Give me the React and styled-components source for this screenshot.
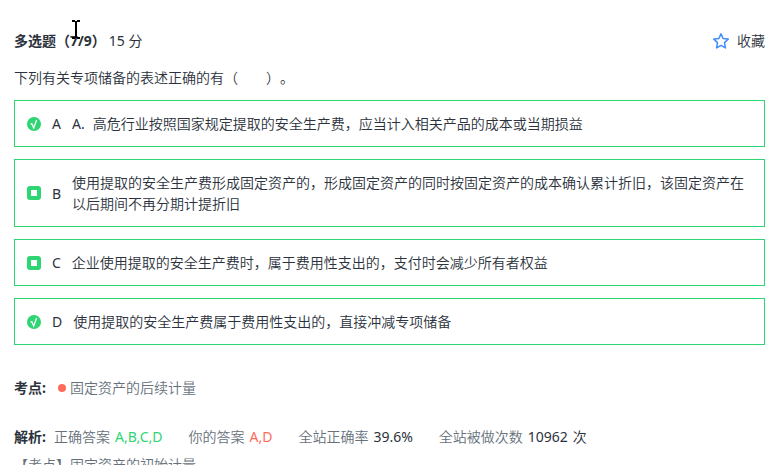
import React from 'react'
import styled, { createGlobalStyle } from 'styled-components'

const color = {
  green: '#2ed573',
  red: '#ff6b5b',
  blue: '#3f8cff',
  text: '#2b323c',
  secondary: '#67717b',
}

const GlobalStyle = createGlobalStyle`
  html {
    scrollbar-width: none;
  }

  body {
    margin: 0;
    background: #fff;
    color: ${color.text};
    font-family: "Noto Sans", "Noto Sans CJK SC", sans-serif;
    font-size: 14px;
    font-weight: 350;
    line-height: 21px;
    text-spacing-trim: space-all;
  }
`

const Page = styled.main`
  position: relative;
  padding: 30px 13px 0 14px;
`

const Header = styled.header`
  display: flex;
  justify-content: space-between;
  align-items: center;
  margin-bottom: 16px;
`

const Title = styled.h1`
  display: flex;
  gap: 3px;
  margin: 0;
  font-size: 14px;
  font-weight: bold;
`

const Score = styled.span`
  font-weight: 400;
`

const Collect = styled.button`
  display: flex;
  align-items: center;
  gap: 8px;
  padding: 0;
  border: 0;
  background: none;
  color: inherit;
  font: inherit;
  cursor: pointer;
`

const Question = styled.p`
  margin: 0 0 12px;
`

const Options = styled.div`
  display: flex;
  flex-direction: column;
  gap: 12px;
  margin-bottom: 32px;
`

const OptionRow = styled.label`
  display: flex;
  align-items: center;
  gap: 11px;
  padding: 12px;
  border: 1px solid ${color.green};
`

const Letter = styled.span`
  font-weight: 400;
`

const Prefix = styled.span`
  margin-right: 8px;
  font-weight: 400;
`

const MarkBox = styled.span`
  position: relative;
  flex: none;
  width: 14px;
  height: 14px;

  svg {
    display: block;
  }
`

const MarkInput = styled.input`
  position: absolute;
  inset: 0;
  width: 14px;
  height: 14px;
  margin: 0;
  opacity: 0;
`

const InfoRow = styled.div`
  display: flex;
  align-items: center;
  gap: 8px;
  margin-bottom: ${props => props.$gap}px;
`

const InfoLabel = styled.strong`
  font-weight: bold;
`

const Point = styled.span`
  display: flex;
  align-items: center;
  gap: 4px;
  padding-left: 4px;
  color: ${color.secondary};
`

const Dot = styled.i`
  width: 8px;
  height: 8px;
  border-radius: 50%;
  background: ${color.red};
`

const Stats = styled.div`
  display: flex;
  gap: 26px;
  color: ${color.secondary};
`

const StatItem = styled.span`
  display: flex;
  gap: 5px;
`

const Value = styled.span`
  color: ${props => props.$color || color.text};
  font-weight: 400;
`

const Unit = styled.span`
  color: ${color.text};
`

const Analysis = styled.p`
  margin: 0;
  color: ${color.secondary};
`

const Pointer = styled.svg`
  position: absolute;
  top: 20px;
  left: 72px;
`

const StarIcon = () => (
  <svg width="16" height="16" viewBox="0 0 16 16" fill="none" aria-hidden="true">
    <path
      d="M8 .9l2.1 4.6 5.1.6-3.7 3.5.9 5.3L8 12.4l-4.4 2.5.9-5.3L.8 6.1l5.1-.6z"
      stroke={color.blue}
      strokeWidth="1.5"
      strokeLinejoin="round"
    />
  </svg>
)

const Mark = ({ checked, id }) => (
  <MarkBox>
    <svg width="14" height="14" viewBox="0 0 14 14" aria-hidden="true">
      {checked ? (
        <>
          <circle cx="7" cy="7" r="7" fill={color.green} />
          <path d="M3.6 7.4l1.2-.8L6.7 11l2.9-8" fill="none" stroke="#fff" strokeWidth="1.3" />
        </>
      ) : (
        <>
          <rect width="14" height="14" rx="3" fill={color.green} />
          <rect x="4" y="4" width="6" height="6" fill="#fff" />
        </>
      )}
    </svg>
    <MarkInput type="checkbox" id={id} defaultChecked={checked} />
  </MarkBox>
)

const Option = ({ letter, prefix, text, checked }) => (
  <OptionRow htmlFor={`option-${letter}`}>
    <Mark checked={checked} id={`option-${letter}`} />
    <Letter>{letter}</Letter>
    <span>
      {prefix && <Prefix>{prefix}</Prefix>}
      {text}
    </span>
  </OptionRow>
)

const Stat = ({ name, value, valueColor, unit }) => (
  <StatItem>
    {name}
    <Value $color={valueColor}>{value}</Value>
    {unit && <Unit>{unit}</Unit>}
  </StatItem>
)

const options = [
  { letter: 'A', checked: true, prefix: 'A.', text: '高危行业按照国家规定提取的安全生产费，应当计入相关产品的成本或当期损益' },
  { letter: 'B', checked: false, text: '使用提取的安全生产费形成固定资产的，形成固定资产的同时按固定资产的成本确认累计折旧，该固定资产在以后期间不再分期计提折旧' },
  { letter: 'C', checked: false, text: '企业使用提取的安全生产费时，属于费用性支出的，支付时会减少所有者权益' },
  { letter: 'D', checked: true, text: '使用提取的安全生产费属于费用性支出的，直接冲减专项储备' },
]

const App = () => (
  <>
    <GlobalStyle />
    <Page lang="zh-CN">
      <Header>
        <Title>多选题（7/9）<Score>15 分</Score></Title>
        <Collect type="button">
          <StarIcon />
          收藏
        </Collect>
      </Header>
      <Question>下列有关专项储备的表述正确的有（　　）。</Question>
      <Options>
        {options.map(option => <Option key={option.letter} {...option} />)}
      </Options>
      <InfoRow $gap={28}>
        <InfoLabel>考点:</InfoLabel>
        <Point><Dot />固定资产的后续计量</Point>
      </InfoRow>
      <InfoRow $gap={7}>
        <InfoLabel>解析:</InfoLabel>
        <Stats>
          <Stat name="正确答案" value="A,B,C,D" valueColor={color.green} />
          <Stat name="你的答案" value="A,D" valueColor={color.red} />
          <Stat name="全站正确率" value="39.6%" />
          <Stat name="全站被做次数" value="10962" unit="次" />
        </Stats>
      </InfoRow>
      <Analysis>【考点】固定资产的初始计量</Analysis>
      <Pointer width="8" height="19" viewBox="0 0 8 19" aria-hidden="true">
        <path d="M0 0h3v1h2V0h3v2H5v15h3v2H5v-1H3v1H0v-2h3V2H0z" fill="#000" />
      </Pointer>
    </Page>
  </>
)

export default App
